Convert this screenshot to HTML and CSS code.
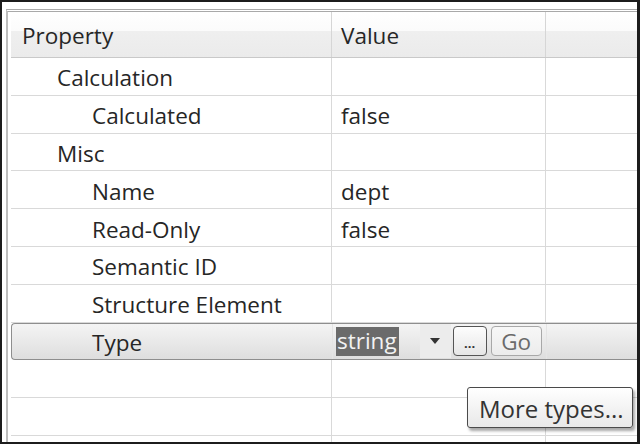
FILE: index.html
```html
<!DOCTYPE html>
<html>
<head>
<meta charset="utf-8">
<link rel="stylesheet" href="styles.css">
</head>
<body>
<div class="frame">
  <div class="panel">
    <div class="row header">
      <div class="cell c1"><span class="lvl0">Property</span></div>
      <div class="cell c2">Value</div>
      <div class="cell c3"></div>
    </div>
    <div class="row">
      <div class="cell c1"><span class="lvl1">Calculation</span></div>
      <div class="cell c2"></div>
      <div class="cell c3"></div>
    </div>
    <div class="row">
      <div class="cell c1"><span class="lvl2">Calculated</span></div>
      <div class="cell c2">false</div>
      <div class="cell c3"></div>
    </div>
    <div class="row">
      <div class="cell c1"><span class="lvl1">Misc</span></div>
      <div class="cell c2"></div>
      <div class="cell c3"></div>
    </div>
    <div class="row">
      <div class="cell c1"><span class="lvl2">Name</span></div>
      <div class="cell c2">dept</div>
      <div class="cell c3"></div>
    </div>
    <div class="row">
      <div class="cell c1"><span class="lvl2">Read-Only</span></div>
      <div class="cell c2">false</div>
      <div class="cell c3"></div>
    </div>
    <div class="row">
      <div class="cell c1"><span class="lvl2">Semantic ID</span></div>
      <div class="cell c2"></div>
      <div class="cell c3"></div>
    </div>
    <div class="row">
      <div class="cell c1"><span class="lvl2">Structure Element</span></div>
      <div class="cell c2"></div>
      <div class="cell c3"></div>
    </div>
    <div class="row selected">
      <div class="cell c1"><span class="lvl2">Type</span></div>
      <div class="cell c2 editor">
        <span class="sel-text">string</span>
        <span class="drop"><svg width="10" height="6" viewBox="0 0 10 6"><path d="M0 0H10L5 6Z" fill="#333"/></svg></span>
        <span class="btn dots">...</span>
        <span class="btn go">Go</span>
      </div>
      <div class="cell c3"></div>
    </div>
    <div class="row">
      <div class="cell c1"></div>
      <div class="cell c2"></div>
      <div class="cell c3"></div>
    </div>
    <div class="row">
      <div class="cell c1"></div>
      <div class="cell c2"></div>
      <div class="cell c3"></div>
    </div>
    <div class="row">
      <div class="cell c1"></div>
      <div class="cell c2"></div>
      <div class="cell c3"></div>
    </div>
    <div class="tooltip">More types...</div>
  </div>
</div>
</body>
</html>
```

FILE: styles.css
```css
html, body {
  margin: 0;
  padding: 0;
  background: #fff;
}
body {
  font-family: "Open Sans", "Noto Sans", sans-serif;
  font-size: 22.5px;
  color: #262626;
}
.frame {
  width: 640px;
  height: 444px;
  box-sizing: border-box;
  border-style: solid;
  border-color: #1c1c1c;
  border-width: 2px 3px 2px 2px;
  padding: 7px 0 0 4px;
  overflow: hidden;
  background: #fff;
}
.panel {
  position: relative;
  height: 100%;
  box-sizing: border-box;
  border-top: 3px double #a9a9a9;
  border-left: 2px solid #bdbdbd;
  padding-left: 3px;
  overflow: hidden;
}
.row {
  display: grid;
  grid-template-columns: 321px 214px 1fr;
  height: 37.8px;
  box-sizing: border-box;
  border-bottom: 1px solid #d9d9d9;
}
.cell {
  display: flex;
  align-items: center;
  box-sizing: border-box;
  border-right: 1px solid #d9d9d9;
  padding-top: 3px;
  white-space: nowrap;
}
.c2 { padding-left: 9px; }
.c3 { border-right: none; }
.header {
  height: 46px;
  border-bottom: 1px solid #c9c9c9;
  background: linear-gradient(#ffffff 0%, #fbfbfb 42%, #efefef 43%, #ebebeb 100%);
}
.header .cell { border-right-color: #d6d6d6; padding-top: 2px; }
.lvl0 { padding-left: 11px; }
.lvl1 { padding-left: 46px; }
.lvl2 { padding-left: 81px; }
.selected {
  border: 1px solid #8e8e8e;
  border-radius: 4px 0 0 4px;
  background: linear-gradient(#f4f4f4 0%, #e9e9e9 50%, #dedede 100%);
  border-right: none;
}
.selected .c1 { padding-left: 0; }
.selected .c1 .lvl2 { padding-left: 80px; }
.selected .cell { border-right-color: #e4e4e4; }
.editor {
  padding-left: 3px;
  padding-top: 0;
  gap: 0;
}
.sel-text {
  background: #6b6b6b;
  color: #f2f2f2;
  height: 29px;
  line-height: 27px;
  padding: 0 2px 0 1px;
}
.drop {
  margin-left: 21px;
  width: 31px;
  height: 34px;
  display: flex;
  align-items: center;
  justify-content: center;
  background: #ececec;
}
.btn {
  height: 30px;
  box-sizing: border-box;
  border-radius: 4px;
  display: flex;
  align-items: center;
  justify-content: center;
  background: linear-gradient(#fdfdfd, #e6e6e6);
}
.dots {
  margin-left: 2px;
  width: 34px;
  border: 1px solid #555;
  font-size: 13px;
  font-weight: bold;
  align-items: flex-end;
  line-height: 1;
  padding-bottom: 5px;
  color: #333;
}
.go {
  margin-left: 4px;
  width: 51px;
  border: 1px solid #a8a8a8;
  color: #6a6a6a;
  background: linear-gradient(#f7f7f7, #ececec);
  padding-top: 1px;
}
.tooltip {
  position: absolute;
  left: 459px;
  top: 375px;
  width: 166px;
  height: 41px;
  box-sizing: border-box;
  border: 1px solid #4a4a4a;
  border-radius: 3px;
  background: linear-gradient(#ffffff, #e8e8e8);
  box-shadow: 2px 3px 3px rgba(0,0,0,0.35);
  color: #333;
  font-size: 24px;
  display: flex;
  align-items: center;
  padding-left: 11px;
  padding-top: 2px;
}
```
